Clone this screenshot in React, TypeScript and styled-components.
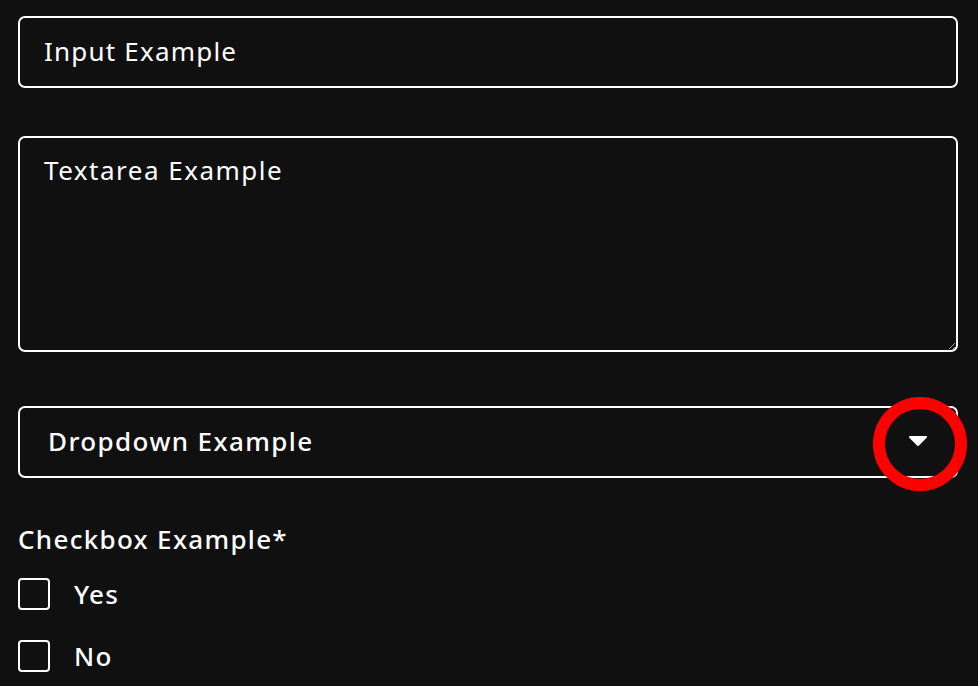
import React from "react";
import styled, { createGlobalStyle } from "styled-components";

const GlobalStyle = createGlobalStyle`
  html, body {
    margin: 0;
    padding: 0;
    background: #101010;
  }
  body {
    font-family: "Noto Sans", "Liberation Sans", sans-serif;
    color: #ffffff;
  }
`;

const Form = styled.form`
  display: flex;
  flex-direction: column;
  width: 940px;
  padding: 16px 0 0 18px;
`;

const fieldBase = `
  box-sizing: border-box;
  width: 100%;
  background: #101010;
  border: 2px solid #ffffff;
  border-radius: 7px;
  color: #ffffff;
  font-family: "Noto Sans", "Liberation Sans", sans-serif;
  font-size: 26px;
  letter-spacing: 1.2px;
  outline: none;
`;

const TextInput = styled.input`
  ${fieldBase}
  height: 72px;
  padding: 0 24px 2px;
  &::placeholder {
    color: #ffffff;
    opacity: 1;
  }
`;

const TextArea = styled.textarea`
  ${fieldBase}
  display: block;
  height: 216px;
  margin-top: 48px;
  padding: 14px 24px;
  letter-spacing: 1.5px;
  resize: vertical;
  &::placeholder {
    color: #ffffff;
    opacity: 1;
  }
`;

const SelectWrap = styled.div`
  position: relative;
  margin-top: 54px;
`;

const Select = styled.div`
  ${fieldBase}
  display: flex;
  align-items: center;
  justify-content: space-between;
  height: 72px;
  padding: 0 28px 2px 28px;
  letter-spacing: 1.4px;
  font-weight: 500;
`;

const Caret = styled.svg`
  width: 20px;
  height: 12px;
`;

const Highlight = styled.div`
  position: absolute;
  right: -9px;
  top: -9px;
  width: 70px;
  height: 70px;
  border: 12px solid #ff0000;
  border-radius: 50%;
  pointer-events: none;
`;

const Legend = styled.div`
  margin-top: 45px;
  font-size: 26px;
  line-height: 32px;
  letter-spacing: 1.3px;
  font-weight: 500;
`;

const Options = styled.div`
  display: flex;
  flex-direction: column;
  gap: 30px;
  margin-top: 23px;
`;

const Option = styled.label`
  display: flex;
  align-items: center;
  gap: 24px;
  font-size: 26px;
  line-height: 32px;
  letter-spacing: 1.2px;
  font-weight: 500;
`;

const Box = styled.span`
  box-sizing: border-box;
  width: 32px;
  height: 32px;
  border: 2px solid #ffffff;
  border-radius: 4px;
`;

export default function App() {
  return (
    <>
      <GlobalStyle />
      <Form>
        <TextInput placeholder="Input Example" />
        <TextArea placeholder="Textarea Example" />
        <SelectWrap>
          <Select>
            <span>Dropdown Example</span>
            <Caret viewBox="0 0 20 12">
              <path d="M2 2 L18 2 L10 10 Z" fill="#ffffff" stroke="#ffffff" strokeWidth="2" strokeLinejoin="round" />
            </Caret>
          </Select>
          <Highlight />
        </SelectWrap>
        <Legend>Checkbox Example*</Legend>
        <Options>
          <Option>
            <Box />
            Yes
          </Option>
          <Option>
            <Box />
            No
          </Option>
        </Options>
      </Form>
    </>
  );
}
